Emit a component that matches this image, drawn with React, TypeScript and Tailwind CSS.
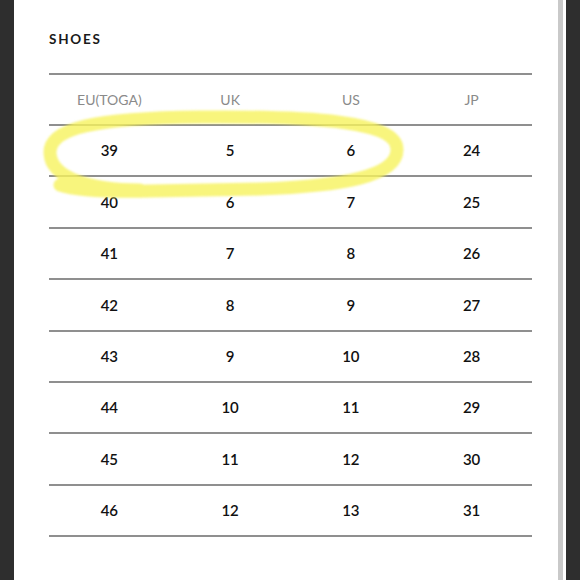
import React from 'react';

const rows: [string, string, string, string][] = [
    ['39', '5', '6', '24'],
    ['40', '6', '7', '25'],
    ['41', '7', '8', '26'],
    ['42', '8', '9', '27'],
    ['43', '9', '10', '28'],
    ['44', '10', '11', '29'],
    ['45', '11', '12', '30'],
    ['46', '12', '13', '31'],
];

const headers = ['EU(TOGA)', 'UK', 'US', 'JP'];

export default function App() {
    return (
        <div className="relative flex w-[580px] h-[580px] bg-white overflow-hidden" style={{ fontFamily: 'Lato, "Open Sans", sans-serif' }}>
            <div className="w-[14px] h-full bg-[#2e2e2e]" />
            <div className="flex-1 pl-[35px] pr-[26px]">
                <div className="pt-[33px] h-[73px] text-[13.5px] font-bold tracking-[0.13em] text-[#1a1a1a] leading-none">SHOES</div>
                <div className="border-t-2 border-[#8f8f8f]">
                    <div className="grid grid-cols-4 h-[51px] items-center border-b-2 border-[#8f8f8f] text-[14px] text-[#8a8a8a]">
                        {headers.map((h) => (
                            <div key={h} className="text-center">{h}</div>
                        ))}
                    </div>
                    {rows.map((r) => (
                        <div key={r[0]} className="grid grid-cols-4 h-[51.4px] items-center border-b-2 border-[#8f8f8f] text-[15px] font-semibold text-[#111]">
                            {r.map((c, i) => (
                                <div key={i} className="text-center">{c}</div>
                            ))}
                        </div>
                    ))}
                </div>
            </div>
            <div className="w-[5px] h-full bg-[#c9c9c9]" />
            <div className="w-[3px] h-full bg-white" />
            <div className="w-[14px] h-full bg-[#2e2e2e]" />

            {/* highlighter marks */}
            <svg className="absolute inset-0 pointer-events-none" width="580" height="580" viewBox="0 0 580 580">
                <path
                    d="M 140 190 C 90 190, 51 178, 50 153 C 49 128, 95 118, 200 117 C 310 116, 396 121, 397 149 C 398 177, 340 186, 260 189 L 150 191 C 105 192, 75 190, 60 185"
                    fill="none"
                    stroke="rgba(246,242,92,0.8)"
                    strokeWidth="13"
                    strokeLinecap="round"
                    strokeLinejoin="round"
                    style={{ filter: 'blur(0.8px)' }}
                />
            </svg>
        </div>
    );
}
